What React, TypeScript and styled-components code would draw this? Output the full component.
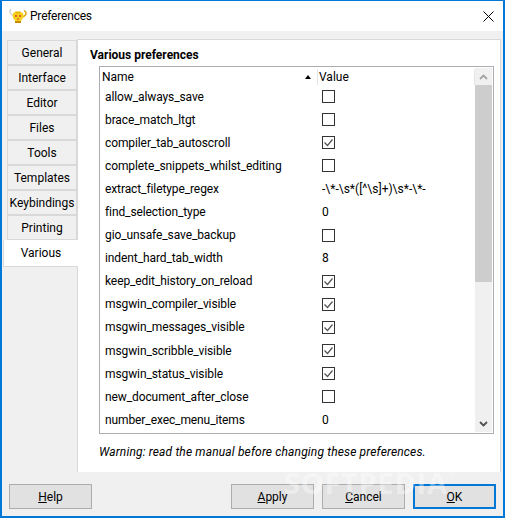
import styled, { createGlobalStyle } from "styled-components";

const GlobalStyle = createGlobalStyle`
  html, body { margin: 0; padding: 0; background: #f0f0f0; }
  #root { width: 505px; height: 518px; }
  * { box-sizing: border-box; }
`;

const Window = styled.div`
  position: relative;
  width: 505px;
  height: 518px;
  border: 1px solid #0078d7;
  border-width: 1px 2px 2px 2px;
  background: #f0f0f0;
  font-family: Roboto, "Open Sans", sans-serif;
  font-size: 12px;
  color: #000;
  display: flex;
  flex-direction: column;
  overflow: hidden;
`;

const TitleBar = styled.div`
  height: 30px;
  flex: none;
  background: #fff;
  display: flex;
  align-items: center;
  padding: 0 9px 0 6px;
  gap: 2px;
`;

const TitleText = styled.div`
  flex: 1;
  font-size: 12px;
  letter-spacing: -0.2px;
`;

const Body = styled.div`
  flex: none;
  height: 441px;
  display: flex;
  padding: 8px 3px 0 3px;
  align-items: flex-start;
`;

const TabColumn = styled.div`
  width: 72px;
  flex: none;
  display: flex;
  flex-direction: column;
  padding-top: 1px;
`;

const Tab = styled.div<{ $active?: boolean }>`
  height: ${(p) => (p.$active ? "27px" : "25px")};
  display: flex;
  align-items: center;
  justify-content: center;
  background: ${(p) => (p.$active ? "#fff" : "#f0f0f0")};
  border: 1px solid #d9d9d9;
  border-right: ${(p) => (p.$active ? "none" : "1px solid #d9d9d9")};
  border-top: ${(p) => (p.$active ? "none" : "1px solid #d9d9d9")};
  margin-left: ${(p) => (p.$active ? "-2px" : "2px")};
  margin-right: ${(p) => (p.$active ? "-1px" : "0")};
  position: relative;
  z-index: ${(p) => (p.$active ? 1 : 0)};
`;

const Panel = styled.div`
  width: 424px;
  flex: none;
  background: #fff;
  border: 1px solid #d9d9d9;
  border-bottom: none;
  height: 433px;
  padding: 7px 7px 0 12px;
  display: flex;
  flex-direction: column;
`;

const PanelTitle = styled.div`
  font-weight: 700;
  font-size: 12px;
  line-height: 16px;
  height: 19px;
`;

const ListBox = styled.div`
  width: 395px;
  height: 368px;
  margin-left: 9px;
  border: 1px solid #acacb3;
  display: flex;
  background: #fff;
`;

const ListColumn = styled.div`
  flex: 1;
  display: flex;
  flex-direction: column;
  min-width: 0;
`;

const HeaderRow = styled.div`
  height: 18px;
  flex: none;
  display: flex;
  align-items: center;
  padding-top: 2px;
`;

const NameHeader = styled.div`
  width: 218px;
  padding-left: 2px;
  height: 100%;
  display: flex;
  align-items: center;
  justify-content: space-between;
  padding-right: 6px;
  border-right: 1px solid #e5e5e5;
`;

const ValueHeader = styled.div`
  flex: 1;
  padding-left: 1px;
  height: 100%;
  display: flex;
  align-items: center;
  border-right: 1px solid #e5e5e5;
`;

const SortArrow = styled.span`
  width: 0;
  height: 0;
  border-left: 3.5px solid transparent;
  border-right: 3.5px solid transparent;
  border-bottom: 4px solid #000;
`;

const Row = styled.div`
  height: 23.1px;
  flex: none;
  display: flex;
  align-items: center;
`;

const RowName = styled.div`
  width: 217px;
  padding-left: 5px;
  letter-spacing: -0.1px;
  white-space: nowrap;
`;

const RowValue = styled.div`
  padding-left: 5px;
  white-space: nowrap;
  display: flex;
  align-items: center;
`;

const CheckBox = styled.span`
  width: 13px;
  height: 13px;
  border: 1px solid #333;
  background: #fff;
  display: flex;
  align-items: center;
  justify-content: center;
`;

const ScrollBar = styled.div`
  width: 17px;
  flex: none;
  margin: 1px 1px 1px 0;
  background: #f0f0f0;
  display: flex;
  flex-direction: column;
`;

const ScrollButton = styled.div`
  height: 17px;
  flex: none;
  display: flex;
  align-items: center;
  justify-content: center;
`;

const ScrollThumb = styled.div`
  height: 197px;
  flex: none;
  background: #cdcdcd;
`;

const ScrollSpacer = styled.div`
  flex: 1;
`;

const WarningText = styled.div`
  font-style: italic;
  line-height: 16px;
  letter-spacing: 0.15px;
  margin: 10px 0 0 9px;
`;

const Footer = styled.div`
  flex: 1;
  display: flex;
  align-items: flex-start;
  padding: 12px 7px 0 7px;
  gap: 8px;
`;

const Spacer = styled.div`
  flex: 1;
`;

const Button = styled.div<{ $primary?: boolean }>`
  width: 83px;
  height: 25px;
  background: #e1e1e1;
  border: ${(p) => (p.$primary ? "2px solid #0078d7" : "1px solid #adadad")};
  display: flex;
  align-items: center;
  justify-content: center;
`;

const Watermark = styled.div`
  position: absolute;
  left: 282px;
  top: 467px;
  font-family: "Open Sans", sans-serif;
  font-weight: 700;
  font-size: 29px;
  letter-spacing: 0.7px;
  line-height: 30px;
  color: rgba(255, 255, 255, 0.4);
  pointer-events: none;

  sup {
    font-size: 9px;
    font-weight: 400;
    line-height: 0;
    vertical-align: 18px;
  }
`;

const tabs = ["General", "Interface", "Editor", "Files", "Tools", "Templates", "Keybindings", "Printing", "Various"];

type Pref = { name: string; value: boolean | string };

const prefs: Pref[] = [
  { name: "allow_always_save", value: false },
  { name: "brace_match_ltgt", value: false },
  { name: "compiler_tab_autoscroll", value: true },
  { name: "complete_snippets_whilst_editing", value: false },
  { name: "extract_filetype_regex", value: "-\\*-\\s*([^\\s]+)\\s*-\\*-" },
  { name: "find_selection_type", value: "0" },
  { name: "gio_unsafe_save_backup", value: false },
  { name: "indent_hard_tab_width", value: "8" },
  { name: "keep_edit_history_on_reload", value: true },
  { name: "msgwin_compiler_visible", value: true },
  { name: "msgwin_messages_visible", value: true },
  { name: "msgwin_scribble_visible", value: true },
  { name: "msgwin_status_visible", value: true },
  { name: "new_document_after_close", value: false },
  { name: "number_exec_menu_items", value: "0" },
];

const AppIcon = () => (
  <svg width="20" height="18" viewBox="0 0 20 18">
    <path d="M3 2c-2 2-1 6 3 7" fill="none" stroke="#d0d0d0" strokeWidth="1.2" />
    <path d="M16 4c3 0 3 5-2 6" fill="none" stroke="#e0a800" strokeWidth="1.4" />
    <path d="M5 6c2-1.5 8-1.5 10 0 1 3 0 7-3 8H8C5 13 4 9 5 6z" fill="#f7d21c" />
    <path d="M7 4.5h6l-1 2H8z" fill="#e8b400" />
    <rect x="7" y="14" width="6" height="2" fill="#c98a00" />
    <circle cx="8" cy="9" r="1" fill="#d8382a" />
    <circle cx="12" cy="9" r="1" fill="#d8382a" />
    <path d="M9 11.5h2v1H9z" fill="#d8382a" />
  </svg>
);

const CloseIcon = () => (
  <svg width="11" height="11" viewBox="0 0 11 11">
    <path d="M0.5 0.5l10 10M10.5 0.5l-10 10" stroke="#000" strokeWidth="1" fill="none" />
  </svg>
);

const Tick = () => (
  <svg width="11" height="11" viewBox="0 0 11 11">
    <path d="M1.5 5.5l3 3 5-6" stroke="#555" strokeWidth="1.2" fill="none" />
  </svg>
);

const Chevron = ({ up }: { up?: boolean }) => (
  <svg width="9" height="6" viewBox="0 0 9 6">
    <path d={up ? "M1 5l3.5-3.5L8 5" : "M1 1l3.5 3.5L8 1"} stroke={up ? "#a3a3a3" : "#505050"} strokeWidth="1.8" fill="none" />
  </svg>
);

const App = () => {
  return (
    <Window>
      <GlobalStyle />
      <TitleBar>
        <AppIcon />
        <TitleText>Preferences</TitleText>
        <CloseIcon />
      </TitleBar>
      <Body>
        <TabColumn>
          {tabs.map((t) => (
            <Tab key={t} $active={t === "Various"}>{t}</Tab>
          ))}
        </TabColumn>
        <Panel>
          <PanelTitle>Various preferences</PanelTitle>
          <ListBox>
            <ListColumn>
              <HeaderRow>
                <NameHeader>
                  Name
                  <SortArrow />
                </NameHeader>
                <ValueHeader>Value</ValueHeader>
              </HeaderRow>
              {prefs.map((p) => (
                <Row key={p.name}>
                  <RowName>{p.name}</RowName>
                  <RowValue>
                    {typeof p.value === "string" ? p.value : <CheckBox>{p.value && <Tick />}</CheckBox>}
                  </RowValue>
                </Row>
              ))}
            </ListColumn>
            <ScrollBar>
              <ScrollButton><Chevron up /></ScrollButton>
              <ScrollThumb />
              <ScrollSpacer />
              <ScrollButton><Chevron /></ScrollButton>
            </ScrollBar>
          </ListBox>
          <WarningText>Warning: read the manual before changing these preferences.</WarningText>
        </Panel>
      </Body>
      <Footer>
        <Button><span><u>H</u>elp</span></Button>
        <Spacer />
        <Button><span><u>A</u>pply</span></Button>
        <Button><span><u>C</u>ancel</span></Button>
        <Button $primary><span><u>O</u>K</span></Button>
      </Footer>
      <Watermark>SOFTPEDIA<sup>®</sup></Watermark>
    </Window>
  );
};

export default App;
